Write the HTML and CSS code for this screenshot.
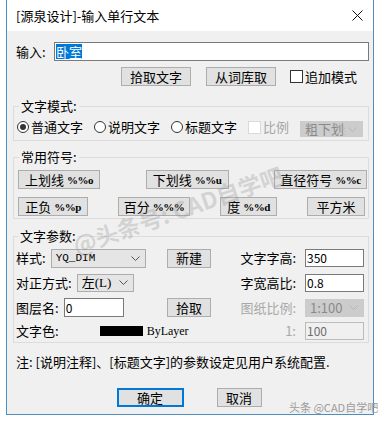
FILE: index.html
```html
<!DOCTYPE html>
<html lang="zh-CN">
<head>
  <meta charset="UTF-8" />
  <meta name="viewport" content="width=device-width, initial-scale=1" />
  <title>输入单行文本</title>
  <link rel="stylesheet" href="styles.css">
</head>
<body>

  <div class="window">
    <div class="titlebar">
      <span class="title">[源泉设计]-输入单行文本</span>
      <svg class="close" width="11" height="11" viewBox="0 0 11 11">
        <path d="M0.5 0.5 L10.5 10.5 M10.5 0.5 L0.5 10.5" stroke="#111" stroke-width="1" fill="none" />
      </svg>
    </div>

    <div class="content">
      <div class="input-row">
        <span class="lbl input-lbl">输入:</span>
        <div class="textbox grow"><span class="sel">卧室</span></div>
      </div>

      <div class="pick-row">
        <button class="btn pick">拾取文字</button>
        <button class="btn pick">从词库取</button>
        <span class="check"><span class="box"></span>追加模式</span>
      </div>

      <fieldset class="group">
        <legend>文字模式:</legend>
        <div class="mode-row">
          <span class="radio"><span class="circle on"></span>普通文字</span>
          <span class="radio"><span class="circle"></span>说明文字</span>
          <span class="radio"><span class="circle"></span>标题文字</span>
          <span class="check off"><span class="box"></span>比例</span>
          <div class="combo disabled under">
            <span class="combo-text clip">粗下划线</span>
            <svg class="arrow" width="9" height="5" viewBox="0 0 9 5"><path d="M0.5 0.5 L4.5 4.5 L8.5 0.5" stroke="#b5b5b5" fill="none" /></svg>
          </div>
        </div>
      </fieldset>

      <fieldset class="group">
        <legend>常用符号:</legend>
        <div class="sym-row">
          <button class="btn sym" style="width:82px">上划线 <span class="code">%%o</span></button>
          <button class="btn sym" style="width:83px">下划线 <span class="code">%%u</span></button>
          <button class="btn sym" style="width:93px">直径符号 <span class="code">%%c</span></button>
        </div>
        <div class="sym-row second">
          <button class="btn sym" style="width:70px">正负 <span class="code">%%p</span></button>
          <button class="btn sym" style="width:72px">百分 <span class="code">%%%</span></button>
          <button class="btn sym" style="width:57px">度 <span class="code">%%d</span></button>
          <button class="btn sym" style="width:58px">平方米</button>
        </div>
      </fieldset>

      <fieldset class="group params-group">
        <legend>文字参数:</legend>
        <div class="params">
          <div class="field">
            <span class="lbl">样式:</span>
            <div class="combo style-combo">
              <span class="combo-text mono">YQ_DIM</span>
              <svg class="arrow" width="9" height="5" viewBox="0 0 9 5"><path d="M0.5 0.5 L4.5 4.5 L8.5 0.5" stroke="#555" fill="none" /></svg>
            </div>
          </div>
          <button class="btn small">新建</button>
          <span class="rlbl">文字字高:</span>
          <div class="textbox num">350</div>

          <div class="field">
            <span class="lbl">对正方式:</span>
            <div class="combo just-combo">
              <span class="combo-text">左<span class="serif">(L)</span></span>
              <svg class="arrow" width="9" height="5" viewBox="0 0 9 5"><path d="M0.5 0.5 L4.5 4.5 L8.5 0.5" stroke="#555" fill="none" /></svg>
            </div>
          </div>
          <span></span>
          <span class="rlbl">字宽高比:</span>
          <div class="textbox num">0.8</div>

          <div class="field">
            <span class="lbl">图层名:</span>
            <div class="textbox layer">0</div>
          </div>
          <button class="btn small">拾取</button>
          <span class="rlbl dim">图纸比例:</span>
          <div class="combo disabled scale">
            <span class="combo-text">1:100</span>
            <svg class="arrow" width="9" height="5" viewBox="0 0 9 5"><path d="M0.5 0.5 L4.5 4.5 L8.5 0.5" stroke="#b5b5b5" fill="none" /></svg>
          </div>

          <div class="field color-field">
            <span class="lbl">文字色:</span>
            <span class="swatch"></span>
            <span class="serif bylayer">ByLayer</span>
          </div>
          <span class="rlbl dim">1:</span>
          <div class="textbox num disabled">100</div>
        </div>
      </fieldset>

      <p class="note">注: [说明注释]、[标题文字]的参数设定见用户系统配置.</p>

      <div class="actions">
        <button class="btn default">确定</button>
        <button class="btn cancel">取消</button>
      </div>
    </div>

    <div class="watermark">@头条号: CAD自学吧</div>
  </div>

  <div class="corner-mark">头条 @CAD自学吧</div>

</body>
</html>
```

FILE: styles.css
```css
body {
  margin: 0;
  background: #fff;
  font-family: "Noto Sans CJK SC", "Noto Sans", sans-serif;
  font-size: 13px;
  line-height: 16px;
  color: #000;
  position: relative;
  height: 422px;
  overflow: hidden;
}
.window {
  position: relative;
  margin-left: 6px;
  width: 368px;
  height: 415px;
  box-sizing: border-box;
  border: 1px solid #4f8fc0;
  border-top: none;
  background: #f0f0f0;
  overflow: hidden;
}
.titlebar {
  height: 31px;
  background: #fff;
  display: flex;
  align-items: center;
  justify-content: space-between;
  padding: 0 9px 0 9px;
}
.close {
  margin-right: 1px;
}
.content {
  padding: 0 4px 0 6px;
}

/* controls */
.btn {
  font: inherit;
  color: #000;
  background: #e1e1e1;
  border: 1px solid #adadad;
  height: 19px;
  padding: 0;
  margin: 0;
  box-sizing: border-box;
  line-height: 16px;
  display: flex;
  align-items: center;
  justify-content: center;
  gap: 3px;
}
.btn.default {
  border-color: #0078d7;
  box-shadow: inset 0 0 0 1px #0078d7;
}
.textbox {
  background: #fff;
  border: 1px solid #7a7a7a;
  height: 19px;
  box-sizing: border-box;
  display: flex;
  align-items: center;
  padding: 0 1px;
  font-size: 12px;
}
.textbox.disabled {
  background: #f0f0f0;
  border-color: #bcbcbc;
  color: #6d6d6d;
}
.sel {
  background: #0078d7;
  color: #fff;
  font-size: 13px;
  line-height: 15px;
}
.combo {
  height: 18px;
  box-sizing: border-box;
  background: #e5e5e5;
  border: 1px solid #adadad;
  display: flex;
  align-items: center;
  justify-content: space-between;
  gap: 3px;
  padding: 0 5px 0 4px;
}
.combo.disabled {
  background: #cccccc;
  border-color: #cccccc;
  color: #8a8a8a;
}
.combo-text {
  white-space: nowrap;
}
.combo-text.clip {
  flex: 1;
  min-width: 0;
  overflow: hidden;
}
.arrow {
  flex-shrink: 0;
}
.mono {
  font-family: "Liberation Mono", monospace;
  font-size: 11px;
}
.serif {
  font-family: "Liberation Serif", serif;
}
.code {
  font-family: "Liberation Serif", serif;
  font-size: 11px;
  font-weight: bold;
  letter-spacing: -0.5px;
}
.radio,
.check {
  display: flex;
  align-items: center;
  gap: 2px;
  white-space: nowrap;
}
.circle {
  width: 12px;
  height: 12px;
  box-sizing: border-box;
  border: 1px solid #333;
  border-radius: 50%;
  background: #fff;
  position: relative;
}
.circle.on::after {
  content: "";
  position: absolute;
  left: 2px;
  top: 2px;
  width: 6px;
  height: 6px;
  border-radius: 50%;
  background: #333;
}
.box {
  width: 13px;
  height: 13px;
  box-sizing: border-box;
  border: 1px solid #333;
  background: #fff;
}
.check.off {
  color: #a6a6a6;
}
.check.off .box {
  border-color: #d9d9d9;
}

/* rows */
.input-row {
  display: flex;
  align-items: center;
  margin-top: 11px;
  padding-left: 3px;
}
.input-lbl {
  width: 38px;
}
.grow {
  flex: 1;
}
.pick-row {
  display: flex;
  align-items: center;
  margin-top: 6px;
}
.pick {
  width: 70px;
}
.pick-row .pick:first-child {
  margin-left: 108px;
  margin-right: 15px;
}
.pick-row .check {
  margin-left: 14px;
}

/* groups */
.group {
  margin: 12px 0 0 0;
  padding: 5px 1px 5px 3px;
  border: 1px solid #dcdcdc;
  min-inline-size: 0;
}
.group + .group {
  margin-top: 8px;
}
.group legend {
  margin-left: 2px;
  padding: 0 2px;
  line-height: 16px;
}
.mode-row {
  display: flex;
  align-items: center;
  gap: 11px;
  height: 16px;
}
.combo.under {
  width: 63px;
  height: 16px;
  margin-top: 4px;
}
.sym-row {
  display: flex;
  justify-content: space-between;
  padding-left: 1px;
}
.sym-row.second {
  margin-top: 8px;
  padding-right: 2px;
}
.group:nth-of-type(2) {
  padding-bottom: 2px;
}
.params-group {
  margin-top: 9px !important;
  padding: 2px 1px 0 2px;
}
.params {
  display: grid;
  grid-template-columns: 151px 44px 94px 59px;
  grid-template-rows: 24px 25px 25px 22px;
  align-items: center;
}
.field {
  display: flex;
  align-items: center;
  gap: 5px;
  white-space: nowrap;
}
.color-field {
  grid-column: span 2;
}
.style-combo {
  width: 95px;
  height: 19px;
}
.just-combo {
  width: 57px;
}
.layer {
  width: 60px;
}
.swatch {
  width: 43px;
  height: 10px;
  background: #000;
  margin-left: 36px;
}
.bylayer {
  font-size: 12px;
  margin-left: -1px;
}
.small {
  width: 44px;
}
.rlbl {
  text-align: right;
  padding-right: 9px;
}
.dim {
  color: #a8a8a8;
}
.num {
  height: 18px;
}
.scale {
  height: 18px;
}

/* footer */
.note {
  margin: 11px 0 0 3px;
}
.actions {
  display: flex;
  justify-content: center;
  gap: 33px;
  margin-top: 18px;
  padding-right: 4px;
}
.default {
  width: 67px;
}
.cancel {
  width: 45px;
}

/* overlays */
.watermark {
  position: absolute;
  left: 62px;
  top: 232px;
  transform: rotate(-19deg);
  transform-origin: left top;
  font-size: 23px;
  font-weight: bold;
  line-height: 28px;
  white-space: nowrap;
  color: rgba(150, 150, 150, 0.32);
  pointer-events: none;
}
.corner-mark {
  position: absolute;
  left: 289px;
  top: 400px;
  font-size: 11px;
  line-height: 14px;
  color: #9c9c9c;
  white-space: nowrap;
}
```
